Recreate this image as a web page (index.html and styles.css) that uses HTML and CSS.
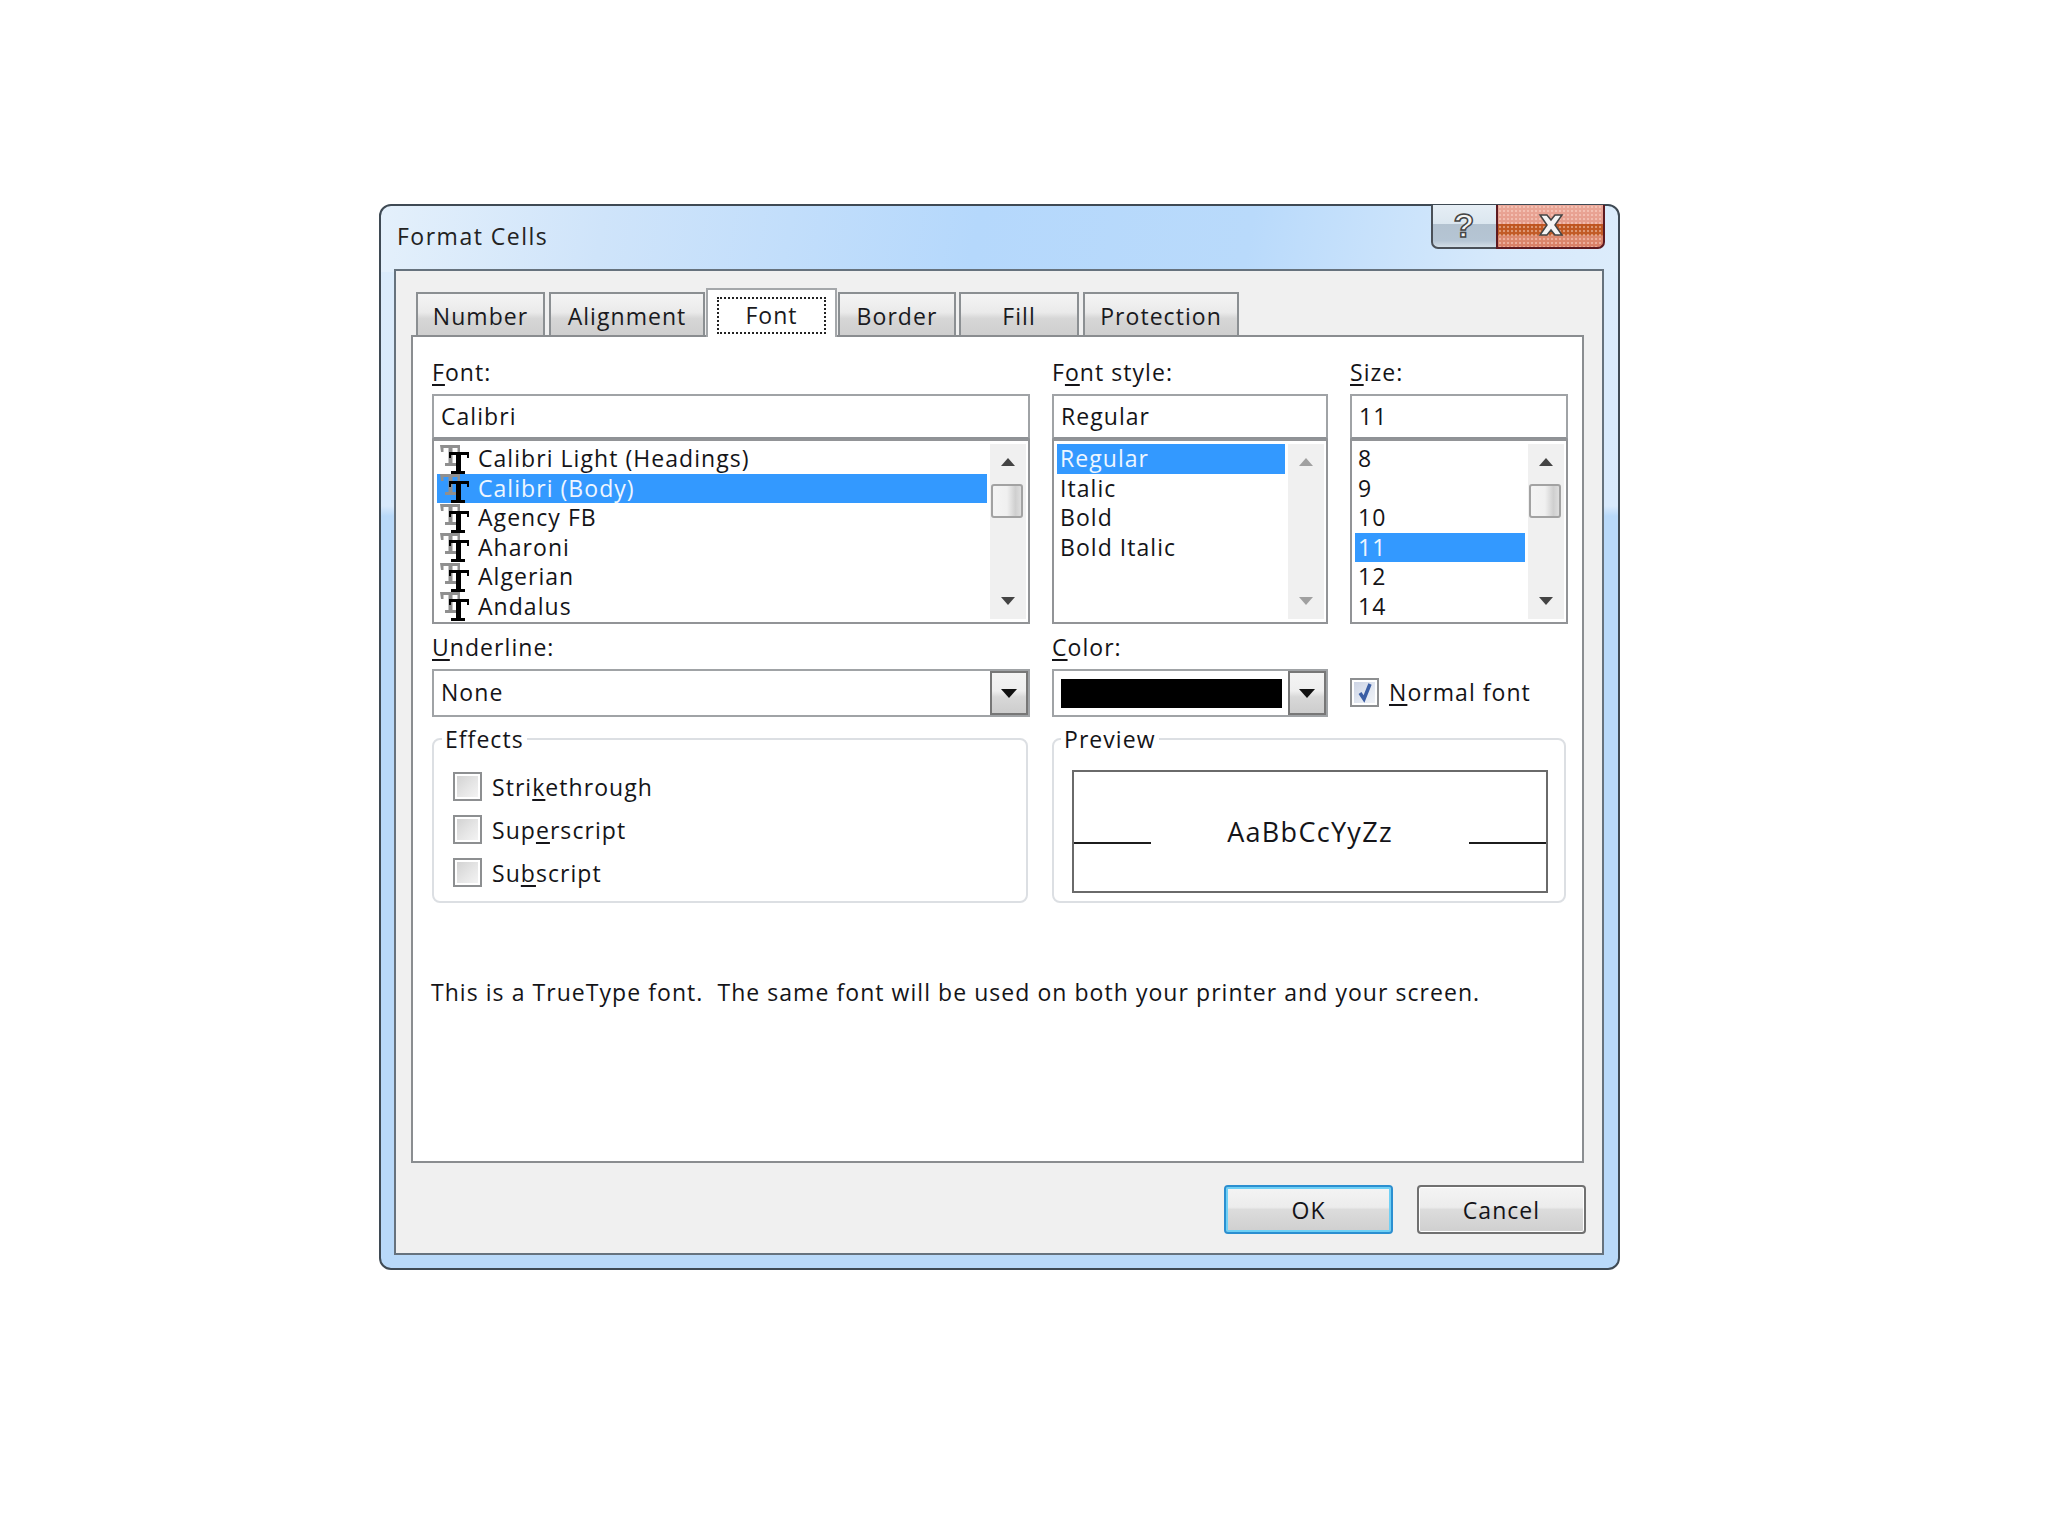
FILE: index.html
```html
<!DOCTYPE html>
<html lang="en">
<head>
<meta charset="utf-8">
<title>Format Cells</title>
<link rel="stylesheet" href="styles.css">
</head>
<body>
<svg class="defs" width="0" height="0" aria-hidden="true">
  <symbol id="tt" viewBox="0 0 30 30">
    <path fill="#8f8f8f" d="M0 1h20v7h-2.500V4h-5v15h3.500v3H5v-3h3.500V4h-5v4H1z"/>
    <path fill="#000" d="M9 8h20v6h-2v-3h-6v16h4v3H11v-3h5V11H11v3H9z"/>
  </symbol>
</svg>
<main class="window">
  <header class="titlebar">
    <span class="title">Format Cells</span>
    <div class="controls">
      <span class="ctl help"><span class="qmark">?</span></span>
      <span class="ctl close">
        <svg width="26" height="22" viewBox="0 0 26 22"><path d="M2 1h7l4 5 4-5h7l-7 10 7 10h-7l-4-5-4 5H2l7-10z" fill="#f4f4f4" stroke="#444" stroke-width="1.5"/></svg>
      </span>
    </div>
  </header>
  <section class="client">
    <nav class="tabs">
      <span class="tab t-number">Number</span>
      <span class="tab t-align">Alignment</span>
      <span class="tab active t-font"><span class="focus">Font</span></span>
      <span class="tab t-border">Border</span>
      <span class="tab t-fill">Fill</span>
      <span class="tab t-prot">Protection</span>
    </nav>
    <div class="page">
      <div class="grid">
        <div class="field">
          <div class="label"><u>F</u>ont:</div>
          <div class="input">Calibri</div>
          <div class="list">
            <ul class="rows">
              <li class="row"><svg class="tt"><use href="#tt"/></svg>Calibri Light (Headings)</li>
              <li class="row sel"><svg class="tt"><use href="#tt"/></svg>Calibri (Body)</li>
              <li class="row"><svg class="tt"><use href="#tt"/></svg>Agency FB</li>
              <li class="row"><svg class="tt"><use href="#tt"/></svg>Aharoni</li>
              <li class="row"><svg class="tt"><use href="#tt"/></svg>Algerian</li>
              <li class="row"><svg class="tt"><use href="#tt"/></svg>Andalus</li>
            </ul>
            <div class="scroll"><i class="up"></i><b class="thumb"></b><i class="down"></i></div>
          </div>
        </div>
        <div class="field">
          <div class="label">F<u>o</u>nt style:</div>
          <div class="input">Regular</div>
          <div class="list">
            <ul class="rows plain">
              <li class="row sel">Regular</li>
              <li class="row">Italic</li>
              <li class="row">Bold</li>
              <li class="row">Bold Italic</li>
            </ul>
            <div class="scroll disabled"><i class="up"></i><i class="down"></i></div>
          </div>
        </div>
        <div class="field">
          <div class="label"><u>S</u>ize:</div>
          <div class="input">11</div>
          <div class="list">
            <ul class="rows plain">
              <li class="row">8</li>
              <li class="row">9</li>
              <li class="row">10</li>
              <li class="row sel">11</li>
              <li class="row">12</li>
              <li class="row">14</li>
            </ul>
            <div class="scroll"><i class="up"></i><b class="thumb"></b><i class="down"></i></div>
          </div>
        </div>

        <div class="field second">
          <div class="label"><u>U</u>nderline:</div>
          <div class="select"><span class="value">None</span><span class="drop"><i></i></span></div>
        </div>
        <div class="field second">
          <div class="label"><u>C</u>olor:</div>
          <div class="select"><span class="swatch"></span><span class="drop"><i></i></span></div>
        </div>
        <div class="normal">
          <span class="check on">
            <svg width="22" height="24" viewBox="0 0 22 24"><path d="M6 13l4 6 6-15" fill="none" stroke="#3c5fa5" stroke-width="3.500"/></svg>
          </span>
          <span><u>N</u>ormal font</span>
        </div>

        <fieldset class="group effects">
          <legend>Effects</legend>
          <div class="opt"><span class="check"></span><span>Stri<u>k</u>ethrough</span></div>
          <div class="opt"><span class="check"></span><span>Sup<u>e</u>rscript</span></div>
          <div class="opt"><span class="check"></span><span>Su<u>b</u>script</span></div>
        </fieldset>
        <fieldset class="group previewgroup">
          <legend>Preview</legend>
          <div class="preview">
            <span class="rule"></span>
            <span class="sample">AaBbCcYyZz</span>
            <span class="rule"></span>
          </div>
        </fieldset>
      </div>
      <p class="info">This is a TrueType font.&nbsp; The same font will be used on both your printer and your screen.</p>
    </div>
    <footer class="footer">
      <span class="btn default">OK</span>
      <span class="btn">Cancel</span>
    </footer>
  </section>
</main>
</body>
</html>
```

FILE: styles.css
```css
* { box-sizing: border-box; }
html, body { margin: 0; padding: 0; background: #fff; }
body {
  width: 2048px;
  height: 1536px;
  overflow: hidden;
  padding: 204px 0 0 379px;
  font-family: "Open Sans", "Noto Sans", sans-serif;
  font-size: 23px;
  line-height: 30px;
  letter-spacing: 1.05px;
  color: #141418;
}
.defs { position: absolute; }
u { text-decoration-thickness: 2px; text-underline-offset: 3px; }

.window {
  width: 1241px;
  height: 1066px;
  border: 2px solid #3f4a54;
  border-radius: 12px;
  padding: 0 14px 13px 13px;
  display: flex;
  flex-direction: column;
  background:
    linear-gradient(100deg, #e4f0fb 0, #cfe4fa 18%, #b5d8fc 48%, #b9dafb 70%, #d6e9fb 90%, #dcecfb 100%) top / 100% 66px no-repeat,
    linear-gradient(180deg, #dcecfb 0, #d8e9fb 300px, #b9d9f9 310px, #b9d9f9 100%);
}
.titlebar {
  height: 63px;
  flex: none;
  display: flex;
  justify-content: space-between;
  align-items: flex-start;
}
.title { margin: 15px 0 0 3px; color: #222; letter-spacing: 1.5px; }
.controls { display: flex; margin-top: -1px; margin-right: -1px; }
.ctl {
  height: 44px;
  display: flex;
  align-items: center;
  justify-content: center;
  border: 2px solid #4a5058;
  border-top: 0;
}
.help {
  width: 65px;
  border-right: 0;
  border-radius: 0 0 0 7px;
  background: linear-gradient(180deg, #e6eef5 0, #dbe6ef 45%, #b3c2d0 46%, #b5c5d4 85%, #d2dde6 100%);
}
.qmark {
  font: bold 34px/1 "Liberation Sans", sans-serif;
  color: #f4f4f4;
  -webkit-text-stroke: 1.5px #444;
  margin-top: -2px;
}
.close {
  width: 109px;
  border-radius: 0 0 7px 0;
  border-color: #5d1a20;
  background:
    radial-gradient(circle, rgba(255, 225, 215, .45) 1px, transparent 1.6px) 0 0 / 4px 4px,
    linear-gradient(180deg, #eba898 0, #e59b8b 45%, #bf5520 46%, #c25c28 72%, #dc8a70 73%, #d97f66 100%);
}
.close svg { margin-top: -2px; }

.client {
  flex: 1;
  border: 2px solid #66727d;
  background: #f0f0f0;
  padding: 21px 18px 0 15px;
  display: flex;
  flex-direction: column;
}
.tabs { display: flex; height: 43px; flex: none; padding-left: 5px; }
.tab {
  height: 43px;
  border: 2px solid #8b8f92;
  border-bottom: 0;
  background: linear-gradient(180deg, #f4f4f4 0, #eaeaea 45%, #d6d6d6 60%, #cfcfcf 100%);
  display: flex;
  align-items: center;
  justify-content: center;
  padding-top: 2px;
  color: #1a1a1e;
}
.t-number { width: 129px; margin-right: 4px; }
.t-align { width: 156px; margin-right: 1px; }
.t-font { width: 131px; margin-right: 1px; }
.t-border { width: 118px; margin-right: 3px; }
.t-fill { width: 120px; margin-right: 4px; }
.t-prot { width: 156px; }
.tab.active {
  height: 49px;
  margin-top: -4px;
  position: relative;
  z-index: 1;
  background: #fff;
  padding: 7px 9px 3px;
  border-color: #a4a7aa;
}
.focus {
  width: 100%;
  height: 100%;
  border: 2px dotted #222;
  display: flex;
  align-items: center;
  justify-content: center;
  padding-bottom: 2px;
}

.page {
  height: 828px;
  flex: none;
  border: 2px solid #8a8d90;
  background: #fff;
  padding: 17px 0 0 19px;
}
.grid {
  display: grid;
  grid-template-columns: 598px 276px 218px;
  column-gap: 22px;
  align-items: start;
}
.label { height: 36px; margin-bottom: 4px; line-height: 36px; }
.input {
  height: 45px;
  border: 2px solid #a0a3a6;
  border-bottom-color: #8f9296;
  padding: 0 7px;
  line-height: 40px;
}
.list {
  height: 185px;
  border: 2px solid #929497;
  padding: 3px 2px 3px 3px;
  display: flex;
  justify-content: space-between;
  overflow: hidden;
}
.rows { list-style: none; margin: 0; padding: 0; flex: 1; }
.row {
  height: 29.5px;
  line-height: 29px;
  display: flex;
  align-items: center;
  padding-left: 3px;
  white-space: nowrap;
}
.row .tt { width: 30px; height: 30px; margin-right: 8px; flex: none; }
.plain .row { padding-left: 3px; }
.row.sel { background: #3399ff; color: #eef6ff; }
.scroll {
  width: 36px;
  margin-left: 3px;
  background: #f0f0f0;
  display: flex;
  flex-direction: column;
  align-items: center;
  flex: none;
}
.scroll .up, .scroll .down { width: 0; height: 0; border-left: 7px solid transparent; border-right: 7px solid transparent; }
.scroll .up { border-bottom: 8px solid #444; margin-top: 14px; }
.scroll .down { border-top: 8px solid #444; margin-top: auto; margin-bottom: 14px; }
.scroll.disabled .up { border-bottom-color: #a0a0a0; }
.scroll.disabled .down { border-top-color: #a0a0a0; }
.thumb {
  display: block;
  width: 32px;
  height: 34px;
  margin: 18px 3px 0 0;
  border: 2px solid #a2a2a2;
  border-radius: 3px;
  background: linear-gradient(90deg, #f4f4f4 0, #f0f0f0 50%, #cfcfcf 80%, #dedede 100%);
}
.second .label { margin: 5px 0 4px; }
.select {
  height: 48px;
  border: 2px solid #a0a3a6;
  display: flex;
  align-items: stretch;
  justify-content: space-between;
}
.value { padding-left: 7px; line-height: 42px; }
.swatch { width: 221px; background: #000; margin: 8px 0 7px 7px; }
.drop {
  width: 38px;
  border: 2px solid #777;
  background: linear-gradient(180deg, #f4f4f4 0, #eee 45%, #d8d8d8 60%, #cdcdcd 100%);
  display: flex;
  align-items: center;
  justify-content: center;
}
.drop i { width: 0; height: 0; border-left: 8px solid transparent; border-right: 8px solid transparent; border-top: 9px solid #111; }
.normal { display: flex; align-items: center; gap: 10px; margin-top: 45px; height: 46px; line-height: 42px; }

.check {
  width: 29px;
  height: 29px;
  flex: none;
  border: 2px solid #8d8f91;
  outline: 2px solid #fff;
  outline-offset: -4px;
  background: linear-gradient(135deg, #cfcfcf 0, #e6e6e6 55%, #f6f6f6 100%);
  display: flex;
  align-items: center;
  justify-content: center;
}
.check.on { background: linear-gradient(135deg, #c8d0e2 0, #e4e9f2 60%, #f2f4f9 100%); }

.group {
  margin: 8px 0 0;
  min-width: 0;
  height: 178px;
  border: 2px solid #dcdfe3;
  border-radius: 8px;
}
.group legend { margin-left: -11px; padding: 0 3px; line-height: 28px; }
.effects { padding: 19px 0 0 19px; margin-right: 2px; }
.opt { display: flex; align-items: center; gap: 10px; height: 29px; margin-bottom: 14px; }
.previewgroup { grid-column: 2 / 4; margin-right: 2px; padding: 17px 16px 0 18px; }
.preview {
  height: 123px;
  border: 2px solid #6a6a6a;
  display: flex;
  align-items: center;
  justify-content: space-between;
}
.rule { width: 77px; height: 2px; background: #1c1c1c; margin-top: 22px; }
.sample { font-size: 27px; letter-spacing: 1.3px; }
.info { margin: 74px 0 0 -1px; white-space: nowrap; line-height: 30px; }

.footer { display: flex; justify-content: flex-end; gap: 24px; padding-top: 22px; margin-right: -2px; }
.btn {
  width: 169px;
  height: 49px;
  border: 2px solid #707070;
  border-radius: 4px;
  display: flex;
  align-items: center;
  justify-content: center;
  background: linear-gradient(180deg, #f4f4f4 0, #ececec 45%, #dcdcdc 50%, #cfcfcf 100%);
  box-shadow: inset 0 0 0 1px #fff;
}
.btn.default { border-color: #2b8fd0; box-shadow: inset 0 0 0 2px #6fd0f5; }
```
